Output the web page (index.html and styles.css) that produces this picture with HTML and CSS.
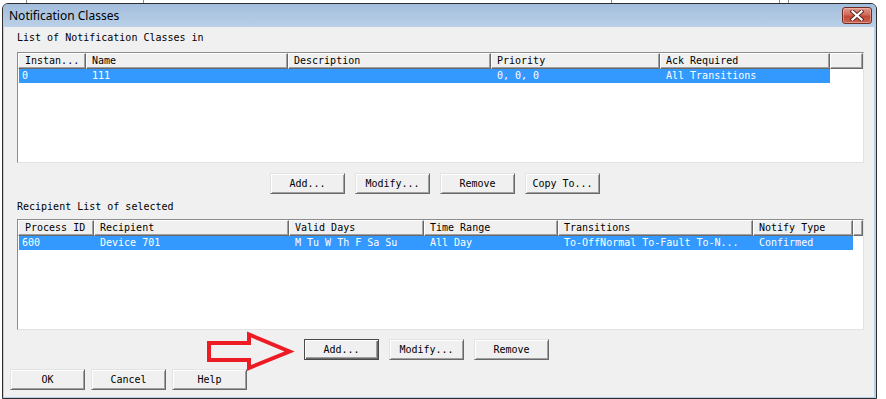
FILE: index.html
```html
<!DOCTYPE html>
<html>
<head>
<meta charset="utf-8">
<title>Notification Classes</title>
<link rel="stylesheet" href="styles.css">
</head>
<body>
<div class="backdrop">
  <div class="bg-cell bg-a"></div>
  <div class="bg-cell bg-b"></div>
  <div class="bg-cell bg-c"></div>
  <div class="bg-cell bg-d"></div>
  <div class="bg-cell bg-e"></div>
</div>
<div class="window">
  <div class="titlebar">
    <span class="title">Notification Classes</span>
    <button class="close" type="button" aria-label="Close">
      <svg width="14" height="11" viewBox="0 0 14 11">
        <path d="M2.5 1.5 L11.5 9.5 M11.5 1.5 L2.5 9.5" stroke="#5a2620" stroke-width="4" stroke-linecap="square" fill="none"/>
        <path d="M2.5 1.5 L11.5 9.5 M11.5 1.5 L2.5 9.5" stroke="#ffffff" stroke-width="2.2" stroke-linecap="square" fill="none"/>
      </svg>
    </button>
  </div>
  <div class="client">
    <div class="label label-top">List of Notification Classes in</div>
    <div class="list list-top">
      <div class="hdr">
        <div class="hc t1 first">Instan...</div>
        <div class="hc t2">Name</div>
        <div class="hc t3">Description</div>
        <div class="hc t4">Priority</div>
        <div class="hc t5">Ack Required</div>
        <div class="hc fill"></div>
      </div>
      <div class="row sel">
        <div class="rc t1 first">0</div>
        <div class="rc t2">111</div>
        <div class="rc t3"></div>
        <div class="rc t4">0, 0, 0</div>
        <div class="rc t5">All Transitions</div>
      </div>
    </div>
    <div class="btnrow btnrow-top">
      <button class="btn" type="button">Add...</button>
      <button class="btn" type="button">Modify...</button>
      <button class="btn" type="button">Remove</button>
      <button class="btn" type="button">Copy To...</button>
    </div>
    <div class="label label-bottom">Recipient List of selected</div>
    <div class="list list-bottom">
      <div class="hdr">
        <div class="hc b1 first">Process ID</div>
        <div class="hc b2">Recipient</div>
        <div class="hc b3">Valid Days</div>
        <div class="hc b4">Time Range</div>
        <div class="hc b5">Transitions</div>
        <div class="hc b6">Notify Type</div>
        <div class="hc fill"></div>
      </div>
      <div class="row sel">
        <div class="rc b1 first">600</div>
        <div class="rc b2">Device 701</div>
        <div class="rc b3">M Tu W Th F Sa Su</div>
        <div class="rc b4">All Day</div>
        <div class="rc b5">To-OffNormal To-Fault To-N...</div>
        <div class="rc b6">Confirmed</div>
      </div>
    </div>
    <div class="btnrow btnrow-recip">
      <button class="btn default" type="button">Add...</button>
      <button class="btn" type="button">Modify...</button>
      <button class="btn" type="button">Remove</button>
    </div>
    <div class="btnrow btnrow-dialog">
      <button class="btn" type="button">OK</button>
      <button class="btn" type="button">Cancel</button>
      <button class="btn" type="button">Help</button>
    </div>
  </div>
  <svg class="arrow" width="92" height="44" viewBox="0 0 92 44">
    <polygon points="5,13 45,13 45,4.5 85.5,21.5 45,38 45,30 5,30" fill="none" stroke="#ed1c24" stroke-width="4" stroke-linejoin="miter"/>
  </svg>
</div>
</body>
</html>
```

FILE: styles.css
```css
html, body {
  margin: 0;
  padding: 0;
  background: #ffffff;
}

body {
  width: 886px;
  height: 399px;
  overflow: hidden;
  font-family: "DejaVu Sans Mono", "Liberation Mono", monospace;
  font-size: 10px;
  letter-spacing: 0;
  color: #000;
}

/* background window peeking above the dialog */
.backdrop {
  height: 3px;
  display: flex;
  overflow: hidden;
}

.bg-cell {
  height: 12px;
  box-sizing: border-box;
  border-right: 1px solid #8a8a8a;
}

.bg-a { width: 27px; }
.bg-b { width: 117px; }
.bg-c { width: 468px; }
.bg-d { width: 168px; }
.bg-e { width: 9px; }

/* dialog window */
.window {
  position: relative;
  width: 875px;
  height: 396px;
  margin-left: 2px;
  box-sizing: border-box;
  border: 1px solid #2e2e2e;
  border-radius: 6px 6px 0 0;
  background: #b7d0ea;
  display: flex;
  flex-direction: column;
}

.titlebar {
  height: 23px;
  flex: none;
  display: flex;
  align-items: flex-start;
  justify-content: space-between;
  background: linear-gradient(#a2bedc, #bad0e8);
  border-radius: 5px 5px 0 0;
  padding: 0 4px 0 6px;
}

.title {
  font-family: "Noto Sans", "Liberation Sans", sans-serif;
  font-size: 12px;
  letter-spacing: 0;
  line-height: 23px;
  color: #000;
}

.close {
  margin-top: 3px;
  width: 30px;
  height: 17px;
  padding: 0;
  box-sizing: border-box;
  border: 1px solid #6e2b22;
  border-radius: 3px;
  background: linear-gradient(#e0998b 0%, #d06a58 45%, #c04a36 55%, #c8624f 100%);
  box-shadow: inset 0 0 0 1px rgba(255, 210, 200, 0.45);
  display: flex;
  align-items: center;
  justify-content: center;
}

.close svg {
  display: block;
}

.client {
  flex: 1;
  margin: 0 2px 1px 1px;
  background: #f0f0f0;
  display: flex;
  flex-direction: column;
  padding-left: 13px;
}

.label {
  height: 12px;
  line-height: 12px;
  white-space: nowrap;
}

.label-top { margin-top: 5px; }
.label-bottom { margin-top: 7px; }

/* list views */
.list {
  width: 847px;
  height: 111px;
  box-sizing: border-box;
  border: 1px solid;
  border-color: #8c8c8c #e3e3e3 #e3e3e3 #8c8c8c;
  background: #ffffff;
  overflow: hidden;
}

.list-top { margin-top: 8px; }
.list-bottom { margin-top: 6px; }

.hdr {
  display: flex;
  height: 16px;
}

.hc {
  flex: none;
  height: 16px;
  box-sizing: border-box;
  border-top: 1px solid #ffffff;
  border-left: 1px solid #ffffff;
  border-right: 1px solid #696969;
  border-bottom: 1px solid #696969;
  box-shadow: inset -1px -1px 0 #a0a0a0;
  background: #f0f0f0;
  padding-left: 5px;
  line-height: 14px;
  white-space: nowrap;
  overflow: hidden;
}

.hc.first {
  padding-left: 6px;
}

.hc.fill {
  flex: 1;
  padding: 0;
}

.row {
  display: flex;
  width: fit-content;
  height: 14px;
  margin-left: 1px;
}

.row .rc {
  flex: none;
  box-sizing: border-box;
  padding-left: 6px;
  line-height: 14px;
  white-space: nowrap;
  overflow: hidden;
}

.row .rc.first {
  padding-left: 3px;
}

.row.sel {
  background: #3399ff;
  color: #ffffff;
}

/* top list columns */
.t1 { width: 68px; }
.t2 { width: 202px; }
.t3 { width: 203px; }
.t4 { width: 169px; }
.t5 { width: 170px; }

.row .rc.t1 { width: 67px; }

/* bottom list columns */
.b1 { width: 76px; }
.b2 { width: 195px; }
.b3 { width: 135px; }
.b4 { width: 134px; }
.b5 { width: 195px; }
.b6 { width: 100px; }

.row .rc.b1 { width: 75px; }

/* buttons */
.btnrow {
  display: flex;
  gap: 10px;
}

.btnrow-top { margin-top: 10px; margin-left: 253px; }
.btnrow-recip { margin-top: 9px; margin-left: 287px; }
.btnrow-dialog { margin-top: 9px; margin-left: -7px; gap: 6px; }

.btn {
  width: 75px;
  height: 21px;
  padding: 0;
  margin: 0;
  box-sizing: border-box;
  font-family: inherit;
  font-size: 10px;
  letter-spacing: 0;
  color: #000;
  background: #f0f0f0;
  border: 1px solid;
  border-color: #e3e3e3 #696969 #696969 #e3e3e3;
  box-shadow: inset 1px 1px 0 #ffffff, inset -1px -1px 0 #a0a0a0;
  border-radius: 0;
  line-height: 19px;
  text-align: center;
}

.btn.default {
  border-color: #4a4a4a;
  box-shadow: inset 1px 1px 0 #ffffff, inset -1px -1px 0 #696969, inset -2px -2px 0 #a0a0a0;
}

/* annotation arrow drawn over the dialog */
.arrow {
  position: absolute;
  left: 201px;
  top: 326px;
}
```
